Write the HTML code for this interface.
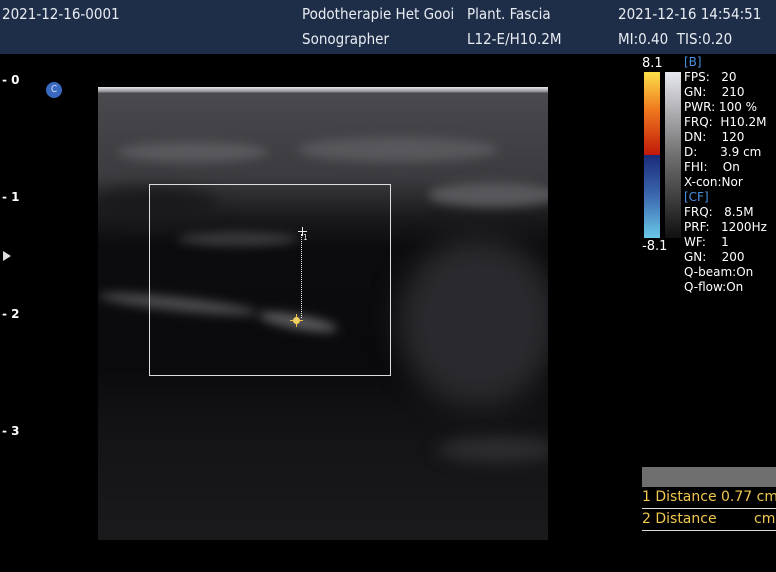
<!DOCTYPE html>
<html><head><meta charset="utf-8"><style>
*{margin:0;padding:0;box-sizing:border-box}
body{width:776px;height:572px;background:#000;position:relative;overflow:hidden;font-family:"DejaVu Sans Condensed","DejaVu Sans","Liberation Sans",sans-serif;color:#fff}
.hdr{position:absolute;left:0;top:0;width:776px;height:54px;background:#1f2e48}
.t{position:absolute;font-size:15px;white-space:nowrap;color:#e8ecf2}
.s{position:absolute;font-size:12px;white-space:nowrap;color:#fff;line-height:15px;font-family:"DejaVu Sans",sans-serif}
.img{position:absolute;left:98px;top:87px;width:450px;height:453px;overflow:hidden;
background:linear-gradient(#e8e8ee 0,#88888c 5px,#4a4a4e 6px,#444448 40px,#3c3c40 90px,#1a1a1c 130px,#0c0c0e 160px,#0a0a0c 280px,#121214 330px,#1a1a1c 453px)}
.b{position:absolute;border-radius:50%;filter:blur(5px)}
</style></head><body>
<div class="hdr"></div>
<div class="t" style="left:2px;top:5px">2021-12-16-0001</div>
<div class="t" style="left:302px;top:5px">Podotherapie Het Gooi</div>
<div class="t" style="left:467px;top:5px">Plant. Fascia</div>
<div class="t" style="left:618px;top:5px">2021-12-16 14:54:51</div>
<div class="t" style="left:302px;top:30px">Sonographer</div>
<div class="t" style="left:467px;top:30px">L12-E/H10.2M</div>
<div class="t" style="left:618px;top:30px">MI:0.40&nbsp; TIS:0.20</div>

<div class="s" style="left:2px;top:73px;font-weight:bold">- 0</div>
<div class="s" style="left:2px;top:190px;font-weight:bold">- 1</div>
<div class="s" style="left:2px;top:307px;font-weight:bold">- 2</div>
<div class="s" style="left:2px;top:424px;font-weight:bold">- 3</div>
<div style="position:absolute;left:3px;top:251px;width:0;height:0;border-left:8px solid #ddd;border-top:5px solid transparent;border-bottom:5px solid transparent"></div>
<div style="position:absolute;left:46px;top:82px;width:16px;height:16px;border-radius:50%;background:#3a6ac0;color:#dde;font-size:10px;text-align:center;line-height:16px">C</div>

<div class="img">
<div class="b" style="left:20px;top:55px;width:150px;height:20px;background:#5a5a5e"></div>
<div class="b" style="left:200px;top:50px;width:200px;height:25px;background:#58585c"></div>
<div class="b" style="left:330px;top:95px;width:130px;height:25px;background:#58585c"></div>
<div class="b" style="left:-10px;top:100px;width:130px;height:35px;background:#1a1a1c;filter:blur(8px)"></div>
<div class="b" style="left:300px;top:150px;width:160px;height:170px;background:#2a2a2e;filter:blur(14px)"></div>
<div class="b" style="left:80px;top:145px;width:120px;height:14px;background:#3a3a3e"></div>
<div class="b" style="left:0;top:210px;width:160px;height:14px;background:#4a4a4e;transform:rotate(6deg)"></div>
<div class="b" style="left:160px;top:228px;width:80px;height:14px;background:#5a5a5e;transform:rotate(10deg)"></div>
<div class="b" style="left:340px;top:350px;width:120px;height:25px;background:#2e2e32;filter:blur(8px)"></div>
</div>

<div style="position:absolute;left:149px;top:184px;width:242px;height:192px;border:1px solid #ddd"></div>
<div style="position:absolute;left:301px;top:234px;height:84px;border-left:1px dotted #eee"></div>
<div style="position:absolute;left:298px;top:231px;width:9px;height:1px;background:#eee"></div>
<div style="position:absolute;left:302px;top:227px;width:1px;height:9px;background:#eee"></div>
<div style="position:absolute;left:303px;top:233px;font-size:8px;color:#eee">1</div>
<div style="position:absolute;left:290px;top:320px;width:13px;height:1px;background:#f0c040"></div>
<div style="position:absolute;left:296px;top:314px;width:1px;height:13px;background:#f0c040"></div>
<div style="position:absolute;left:293px;top:317px;width:7px;height:7px;border-radius:50%;background:#f0d060"></div>

<div style="position:absolute;left:644px;top:72px;width:16px;height:83px;background:linear-gradient(#fbe04a,#f07a20 45%,#c01808 100%)"></div>
<div style="position:absolute;left:644px;top:155px;width:16px;height:83px;background:linear-gradient(#1a2a78,#3c6ab0 50%,#6ac8e8)"></div>
<div style="position:absolute;left:665px;top:72px;width:16px;height:166px;background:linear-gradient(#e8e8f0,#707070 50%,#101010)"></div>
<div class="s" style="left:642px;top:56px;font-size:13px">8.1</div>
<div class="s" style="left:642px;top:239px;font-size:13px">-8.1</div>
<div class="s" style="left:684px;top:55px;line-height:15px;font-size:12px">
<span style="color:#4a90e0">[B]</span><br>FPS:&nbsp;&nbsp; 20<br>GN:&nbsp;&nbsp;&nbsp; 210<br>PWR: 100 %<br>FRQ:&nbsp; H10.2M<br>DN:&nbsp;&nbsp;&nbsp; 120<br>D:&nbsp;&nbsp;&nbsp;&nbsp;&nbsp; 3.9 cm<br>FHI:&nbsp;&nbsp;&nbsp; On<br>X-con:Nor<br><span style="color:#4a90e0">[CF]</span><br>FRQ:&nbsp;&nbsp; 8.5M<br>PRF:&nbsp;&nbsp; 1200Hz<br>WF:&nbsp;&nbsp;&nbsp; 1<br>GN:&nbsp;&nbsp;&nbsp; 200<br>Q-beam:On<br>Q-flow:On</div>

<div style="position:absolute;left:642px;top:467px;width:134px;height:20px;background:#6e6e6e"></div>
<div class="s" style="left:642px;top:489px;color:#f0c850;font-size:14px;line-height:17px">1 Distance 0.77 cm</div>
<div style="position:absolute;left:642px;top:508px;width:134px;height:1px;background:#ddd"></div>
<div class="s" style="left:642px;top:511px;color:#f0c850;font-size:14px;line-height:17px">2 Distance</div>
<div class="s" style="left:754px;top:511px;color:#f0c850;font-size:14px;line-height:17px">cm</div>
<div style="position:absolute;left:642px;top:530px;width:134px;height:1px;background:#ddd"></div>
</body></html>
